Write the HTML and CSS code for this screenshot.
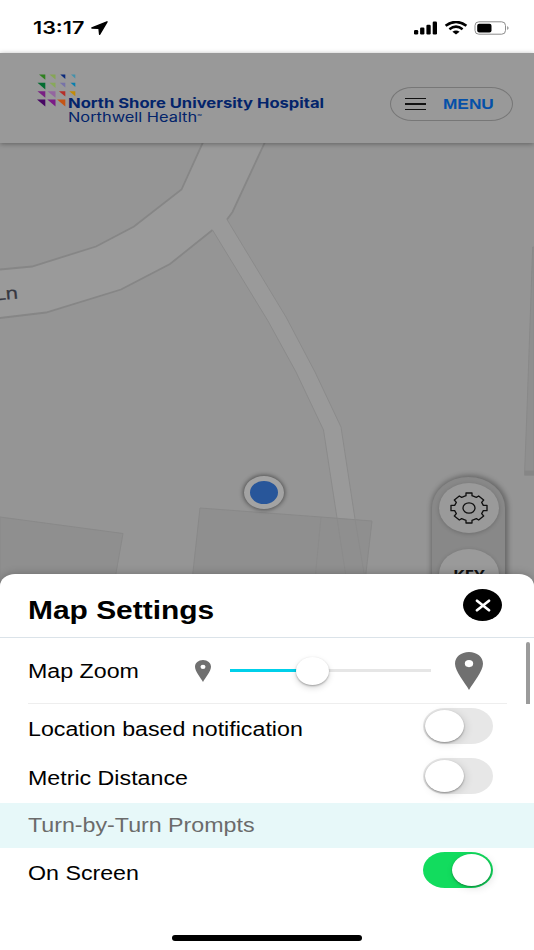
FILE: index.html
```html
<!DOCTYPE html>
<html lang="en">
<head>
<meta charset="UTF-8">
<meta name="viewport" content="width=device-width, initial-scale=1.0">
<title>Map Settings</title>
<link rel="stylesheet" href="styles.css">
</head>
<body>
<div class="screen">
    <!-- Status bar -->
    <div class="status">
        <div class="status-left">
            <span class="wide time">13:17</span>
            <svg width="17" height="14" viewBox="0 0 17 14"><path d="M16 .8 L.9 7 L8 7.4 L8.6 13.3 Z" fill="#000" stroke="#000" stroke-width="1.4" stroke-linejoin="round"/></svg>
        </div>
        <svg class="status-icons" width="96" height="15" viewBox="0 0 96 15">
            <rect x="1" y="9.1" width="4.2" height="4.4" rx="1.2"/>
            <rect x="7.1" y="6.6" width="4.3" height="6.9" rx="1.2"/>
            <rect x="13.4" y="3.7" width="4.3" height="9.8" rx="1.2"/>
            <rect x="19.7" y=".6" width="4.3" height="12.9" rx="1.2"/>
            <path d="M32.6 4.8 Q43 -2.8 53.4 4.8 M36.4 8.2 Q43 3.2 49.6 8.2" fill="none" stroke="#000" stroke-width="2.6"/>
            <path d="M39.4 10.8 Q43 8 46.6 10.8 L43 13.6 Z"/>
            <rect x="62" y=".8" width="30.5" height="12.4" rx="3.8" fill="none" stroke="#8c8c8c" stroke-width="1"/>
            <rect x="64.2" y="2.8" width="14.3" height="8.6" rx="2"/>
            <path d="M94.2 5 Q97 7 94.2 9 Z" fill="#8c8c8c"/>
        </svg>
    </div>

    <!-- Hospital header -->
    <header class="header">
        <div class="logo">
            <svg class="logo-grid" width="40" height="33" viewBox="0 0 40 33">
                <path d="M2 .5h6.3v5.2z" fill="#2f8020"/>
                <path d="M12.5 .5h6v5z" fill="#86a655"/>
                <path d="M23.3 .5h5v4.4z" fill="#0b2a7c"/>
                <path d="M34 .5h4.3v4z" fill="#4391ab"/>
                <path d="M.5 8.8h7.8v6.8z" fill="#046c31"/>
                <path d="M12.5 8.8h6v5.3z" fill="#88a95a"/>
                <path d="M22.8 8.8h5.5v4.8z" fill="#7773a8"/>
                <path d="M33.5 8.8h4.8v4.2z" fill="#087fae"/>
                <path d="M.5 17.2h7.8v6.6z" fill="#792083"/>
                <path d="M10.5 17.2h8v6.6z" fill="#9466a0"/>
                <path d="M21.9 17.2h6.4v5.4z" fill="#b52e29"/>
                <path d="M32.3 17.2h6v5z" fill="#c28b08"/>
                <path d="M0 25.5h8.3v7z" fill="#470763"/>
                <path d="M10.3 25.5h8.2v7z" fill="#7b1b87"/>
                <path d="M20.1 25.5h8.2v7z" fill="#c45516"/>
            </svg>
            <div class="logo-text">
                <span class="wide hospital">North Shore University Hospital</span>
                <span class="wide network">Northwell Health<small>℠</small></span>
            </div>
        </div>
        <button class="menu" type="button">
            <span class="burger"><i></i><i></i><i></i></span>
            <span class="wide menu-label">MENU</span>
        </button>
    </header>

    <!-- Map -->
    <main class="map">
        <svg class="map-canvas" width="534" height="446" viewBox="0 143 534 446">
            <path class="road" d="M0 269.5 L32 266.5 L96 246.5 L134 226.5 L181.5 189.5 L203 143 H265 L232.5 212 L227 219.5 L286 317 L315 372 L341 427 L355 519 L366 590 H348 L337 518 L323.5 430 L296 372 L268 321 L212.5 230 L170 264 L121 289.5 L46 312.5 L0 318 Z"/>
            <path class="road-edge" d="M0 269.5 L32 266.5 L96 246.5 L134 226.5 L181.5 189.5 L204 140 M265 142 L232.5 212 L227 219.5 M212.5 230 L170 264 L121 289.5 L46 312.5 L0 318"/>
            <path class="building" d="M0 517 L123 533.5 L113 590 H0 Z"/>
            <path class="building" d="M200 508 L321 517 L372 521 L364 590 H191 Z"/>
            <path class="building" d="M534 247 L532.7 247 L527 410 L524.5 475 H534 Z"/>
            <path class="building-wall" d="M524.5 470.5 H534 V475.5 H524.5 Z"/>
            <path class="path-edge" d="M212.5 230 L268 321 L296 372 L323.5 430 L337 518 L348 590 M227 219.5 L286 317 L315 372 L341 427 L355 519 L366 585 M321 517 L314 590"/>
            <text class="street" transform="translate(-4.5 300.5) rotate(-5) scale(1.2 1)">Ln</text>
        </svg>
        <div class="position"></div>
        <div class="controls">
            <button class="control" type="button">
                <svg width="38" height="32" viewBox="-57 -48 114 96">
                    <path d="M-9 -45H9V-37L22 -32L29 -36L44 -24L38 -17L43 -8H54V8H43L38 17L44 24L29 36L22 32L9 37V45H-9V37L-22 32L-29 36L-44 24L-38 17L-43 8H-54V-8H-43L-38 -17L-44 -24L-29 -36L-22 -32L-9 -37Z"/>
                    <ellipse rx="18" ry="15.5"/>
                </svg>
            </button>
            <button class="control" type="button"><span class="key">KEY</span></button>
        </div>
    </main>

    <!-- Settings sheet -->
    <section class="sheet">
        <div class="sheet-head">
            <h1 class="wide">Map Settings</h1>
            <button class="close" type="button">
                <svg width="16" height="13" viewBox="0 0 16 13"><path d="M2 1.8 L14 11.2 M14 1.8 L2 11.2" stroke="#fff" stroke-width="2.7" stroke-linecap="round"/></svg>
            </button>
        </div>
        <div class="zoom-area">
            <div class="zoom-row">
                <span class="wide label zoom-label">Map Zoom</span>
                <svg class="pin-small" width="16" height="22" viewBox="0 0 28 37" preserveAspectRatio="none"><path fill-rule="evenodd" d="M14 0C6 0 0 4.9 0 11.5C0 19 10 30 14 37C18 30 28 19 28 11.5C28 4.9 22 0 14 0ZM14 7.8a4.4 3.7 0 1 1 0 7.4a4.4 3.7 0 1 1 0 -7.4Z"/></svg>
                <div class="slider"><div class="thumb"></div></div>
                <svg class="pin-large" width="28" height="38" viewBox="0 0 28 37" preserveAspectRatio="none"><path fill-rule="evenodd" d="M14 0C6 0 0 4.9 0 11.5C0 19 10 30 14 37C18 30 28 19 28 11.5C28 4.9 22 0 14 0ZM14 7.8a4.2 3.5 0 1 1 0 7a4.2 3.5 0 1 1 0 -7Z"/></svg>
            </div>
            <div class="scrollbar"></div>
        </div>
        <div class="row row-location">
            <span class="wide label">Location based notification</span>
            <div class="toggle"><div class="knob"></div></div>
        </div>
        <div class="row row-metric">
            <span class="wide label">Metric Distance</span>
            <div class="toggle"><div class="knob"></div></div>
        </div>
        <div class="section-title"><span class="wide label prompts">Turn-by-Turn Prompts</span></div>
        <div class="row row-screen">
            <span class="wide label">On Screen</span>
            <div class="toggle on"><div class="knob"></div></div>
        </div>
        <div class="home-bar"></div>
    </section>
</div>
</body>
</html>
```
FILE: styles.css
```css
* {
    box-sizing: border-box;
}
body {
    margin: 0;
    font-family: "Liberation Sans", Arial, sans-serif;
    background: #fff;
    color: #000;
}
button {
    border: none;
    padding: 0;
    font-family: inherit;
}
svg {
    display: block;
    flex: none;
}
.screen {
    width: 534px;
    height: 950px;
    overflow: hidden;
    display: flex;
    flex-direction: column;
}
/* the whole interface uses extended lettering */
.wide {
    display: block;
    white-space: nowrap;
    transform: scaleX(1.19);
    transform-origin: left center;
}

/* status bar */
.status {
    height: 53px;
    flex: none;
    display: flex;
    justify-content: space-between;
    padding: 21px 25px 0 33px;
}
.status-left {
    display: flex;
}
.time {
    width: 58px;
    font: 600 17px/14px Inter, sans-serif;
    transform: scaleX(1.27);
}

/* header */
.header {
    height: 90px;
    flex: none;
    display: flex;
    justify-content: space-between;
    padding: 20px 21px 0 37px;
    background: #999;
    box-shadow: 0 1px 5px rgba(0, 0, 0, 0.35);
    position: relative;
    z-index: 1;
}
.logo {
    display: flex;
}
.logo-grid {
    margin-top: 1px;
}
.logo-text {
    margin: 23px 0 0 -9px;
    color: #03246b;
}
.hospital {
    font: 700 13px/15px Inter, sans-serif;
    transform: scaleX(1.275);
}
.network {
    font: 400 13px/13px Inter, sans-serif;
    transform: scaleX(1.26);
}
.network small {
    font-size: 6px;
    line-height: 1px;
    vertical-align: 3px;
}
.menu {
    width: 123px;
    height: 34px;
    margin-top: 14px;
    padding-left: 14px;
    display: flex;
    align-items: center;
    gap: 17px;
    background: none;
    border: 1px solid #777;
    border-radius: 22px / 17px;
}
.burger {
    width: 21px;
    display: grid;
    gap: 4px;
}
.burger i {
    height: 1.5px;
    background: #111;
}
.menu-label {
    font-size: 14.5px;
    font-weight: bold;
    color: #0550a8;
}

/* map */
.map {
    height: 446px;
    flex: none;
    position: relative;
    background: #959595;
}
.road {
    fill: #9a9a9a;
}
.road-edge {
    fill: none;
    stroke: #868686;
    stroke-width: 1.8;
}
.path-edge {
    fill: none;
    stroke: #8b8b8b;
    stroke-width: 1;
}
.building {
    fill: #8f8f8f;
    stroke: #898989;
    stroke-width: 1;
}
.building-wall {
    fill: #868686;
}
.street {
    font: 500 17px "Open Sans", sans-serif;
    fill: #35373f;
    stroke: #35373f;
    stroke-width: 0.4;
}
.position {
    position: absolute;
    left: 244px;
    top: 333px;
    width: 40px;
    height: 33px;
    border: solid #a3a3a3;
    border-width: 5px 6px;
    border-radius: 50%;
    background: #28569a;
    box-shadow: 0 0 4px 1px rgba(0, 0, 0, 0.45);
}
.controls {
    position: absolute;
    left: 432px;
    top: 334px;
    width: 73px;
    height: 112px;
    padding-top: 6px;
    display: flex;
    flex-direction: column;
    align-items: center;
    gap: 16px;
    background: #888;
    border-radius: 37px 37px 0 0 / 31px 31px 0 0;
    box-shadow: 1px 0 5px 2px rgba(0, 0, 0, 0.3);
}
.control {
    width: 60px;
    height: 50px;
    flex: none;
    display: flex;
    align-items: center;
    justify-content: center;
    background: #9a9a9a;
    border-radius: 50%;
    box-shadow: 0 1px 4px rgba(0, 0, 0, 0.2);
}
.control svg {
    fill: none;
    stroke: #111;
    stroke-width: 4;
    stroke-linejoin: round;
}
.key {
    font: 700 15px "Open Sans", sans-serif;
    color: #111;
    transform: scaleX(1.15);
}

/* settings sheet */
.sheet {
    height: 376px;
    flex: none;
    margin-top: -15px;
    position: relative;
    z-index: 2;
    display: flex;
    flex-direction: column;
    background: #fff;
    border-radius: 15px 15px 0 0 / 12px 12px 0 0;
    box-shadow: 0 0 8px rgba(0, 0, 0, 0.25);
}
.sheet-head {
    height: 64px;
    flex: none;
    display: flex;
    justify-content: space-between;
    padding: 15px 32px 0 28px;
    border-bottom: 1px solid #dbe3e9;
}
h1 {
    margin: 6px 0 0;
    font-size: 25px;
    line-height: 30px;
}
h1.wide {
    transform: scaleX(1.197);
}
.close {
    width: 39px;
    height: 32px;
    display: flex;
    align-items: center;
    justify-content: center;
    background: #000;
    border-radius: 50%;
}
.close svg {
    fill: none;
}
.label {
    font-size: 19.5px;
    line-height: 24px;
}
.zoom-area {
    height: 66px;
    flex: none;
    display: flex;
    justify-content: space-between;
    padding: 0 4px 0 28px;
}
.zoom-row {
    width: 479px;
    display: flex;
    align-items: center;
    border-bottom: 1px solid #eee;
}
.zoom-label {
    width: 167px;
    padding-top: 1px;
}
.zoom-row svg {
    fill: #707070;
}
.slider {
    width: 201px;
    height: 2.5px;
    margin: 0 24px 0 19px;
    display: flex;
    align-items: center;
    background: linear-gradient(90deg, #00d0ea 82px, #e6e6e6 82px);
}
.thumb {
    width: 33px;
    height: 28px;
    margin-left: 66px;
    flex: none;
    background: #fff;
    border-radius: 50%;
    box-shadow: 0 1px 2px rgba(0, 0, 0, 0.3), 0 3px 6px rgba(0, 0, 0, 0.15);
}
.scrollbar {
    width: 4px;
    height: 62px;
    margin-top: 4px;
    background: #9b9b9b;
    border-radius: 2px 2px 0 0;
}
.row {
    flex: none;
    display: flex;
    justify-content: space-between;
    padding: 0 41px 0 28px;
}
.row-location {
    height: 49px;
    padding-top: 4px;
}
.row-metric {
    height: 50px;
    padding-top: 5px;
}
.row-screen {
    height: 84px;
    padding-top: 4px;
}
.row .label {
    margin-top: 9px;
}
.row-metric .label {
    margin-top: 8px;
}
.toggle {
    width: 70px;
    height: 36px;
    padding: 2px;
    display: flex;
    background: #e7e7e7;
    border-radius: 22px / 18px;
}
.toggle.on {
    justify-content: flex-end;
    background: #12dc5e;
}
.knob {
    width: 39px;
    height: 32px;
    background: #fff;
    border-radius: 50%;
    box-shadow: 0 1px 2px rgba(0, 0, 0, 0.35), 2px 2px 8px rgba(0, 0, 0, 0.12);
}
.section-title {
    height: 45px;
    flex: none;
    padding: 10px 28px 0;
    background: #e7f8f9;
}
.prompts {
    color: #6b6b6b;
}
.home-bar {
    width: 190px;
    height: 6px;
    flex: none;
    margin: 3px 0 0 172px;
    background: #000;
    border-radius: 3px;
}
```
